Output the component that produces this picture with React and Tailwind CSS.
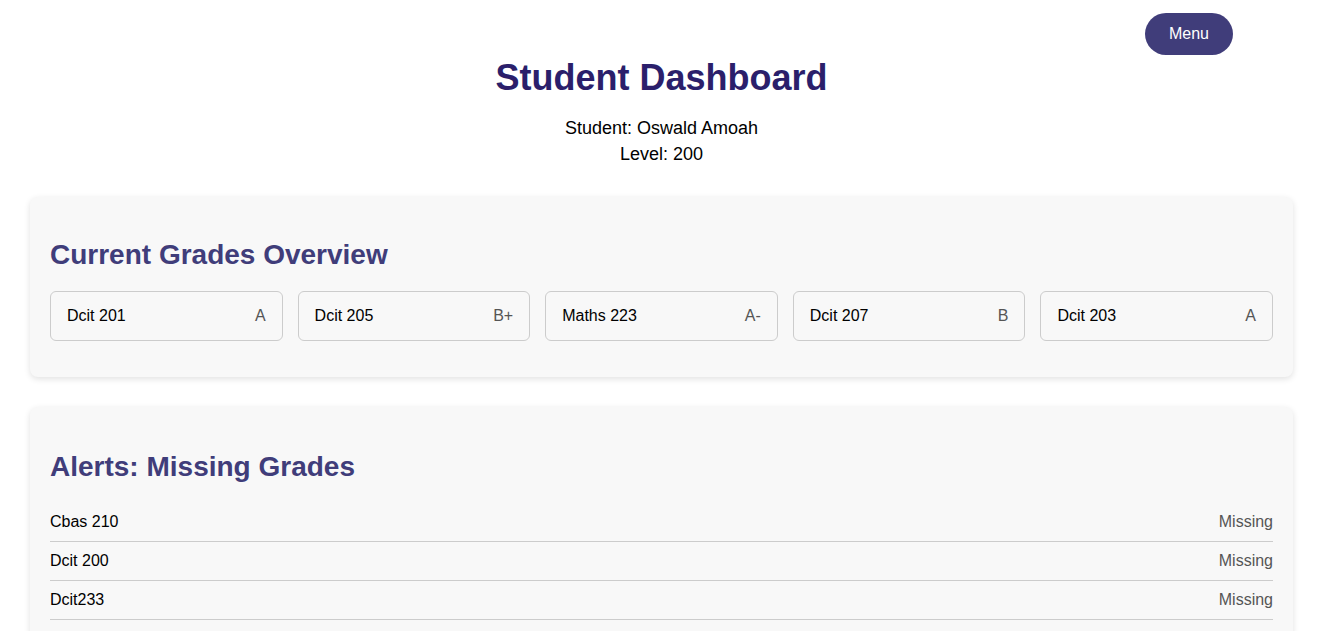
const grades = [
  { course: 'Dcit 201', grade: 'A' },
  { course: 'Dcit 205', grade: 'B+' },
  { course: 'Maths 223', grade: 'A-' },
  { course: 'Dcit 207', grade: 'B' },
  { course: 'Dcit 203', grade: 'A' },
];

const missing = ['Cbas 210', 'Dcit 200', 'Dcit233'];

export default function App() {
  return (
    <div className="min-h-screen bg-white pl-[30px] pr-[28px] pb-10 font-['Liberation_Sans',Arial,sans-serif] text-black">
      {/* header */}
      <header className="relative pt-[57px] text-center">
        <button className="absolute right-[60px] top-[13px] h-[42px] w-[88px] rounded-full bg-[#403d7a] text-base text-white">
          Menu
        </button>
        <h1 className="text-[36px] font-bold leading-[41px] text-[#2b1f6b]">Student Dashboard</h1>
        <div className="mt-[17px] text-[18px] leading-[26px]">
          <p>Student: Oswald Amoah</p>
          <p>Level: 200</p>
        </div>
      </header>

      {/* grades */}
      <section className="mt-[30px] rounded-lg bg-[#f8f8f8] px-5 pb-[36px] pt-[42px] shadow-[0_2px_6px_rgba(0,0,0,0.12)]">
        <h2 className="text-[28px] font-bold leading-[32px] text-[#403d7a]">Current Grades Overview</h2>
        <div className="mt-[20px] grid grid-cols-5 gap-[15px]">
          {grades.map((g) => (
            <div key={g.course} className="flex h-[50px] items-center justify-between rounded-md border border-[#cccccc] px-4 text-base">
              <span>{g.course}</span>
              <span className="text-[#555555]">{g.grade}</span>
            </div>
          ))}
        </div>
      </section>

      {/* missing grades */}
      <section className="mt-[30px] rounded-lg bg-[#f8f8f8] px-5 pb-5 pt-[44px] shadow-[0_2px_6px_rgba(0,0,0,0.12)]">
        <h2 className="text-[28px] font-bold leading-[32px] text-[#403d7a]">Alerts: Missing Grades</h2>
        <ul className="mt-[20px]">
          {missing.map((m) => (
            <li key={m} className="flex items-center justify-between border-b border-[#cccccc] py-[10px] text-base leading-[18px]">
              <span>{m}</span>
              <span className="text-[#555555]">Missing</span>
            </li>
          ))}
        </ul>
      </section>
    </div>
  );
}
